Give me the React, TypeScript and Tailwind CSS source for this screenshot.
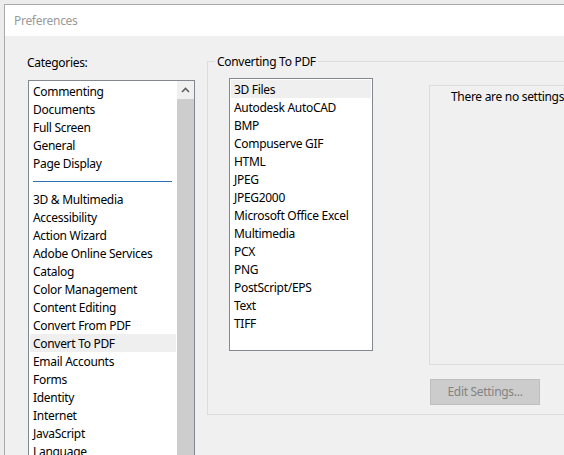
import React from 'react';

const topCategories = ['Commenting', 'Documents', 'Full Screen', 'General', 'Page Display'];
const otherCategories = [
  '3D & Multimedia',
  'Accessibility',
  'Action Wizard',
  'Adobe Online Services',
  'Catalog',
  'Color Management',
  'Content Editing',
  'Convert From PDF',
  'Convert To PDF',
  'Email Accounts',
  'Forms',
  'Identity',
  'Internet',
  'JavaScript',
  'Language',
];
const fileTypes = [
  '3D Files',
  'Autodesk AutoCAD',
  'BMP',
  'Compuserve GIF',
  'HTML',
  'JPEG',
  'JPEG2000',
  'Microsoft Office Excel',
  'Multimedia',
  'PCX',
  'PNG',
  'PostScript/EPS',
  'Text',
  'TIFF',
];

function Row({ label, selected }: { label: string; selected?: boolean }) {
  return (
    <div
      className={`h-[18px] mx-px pl-[3px] leading-[20px] whitespace-nowrap text-black ${
        selected ? 'bg-[#efefef]' : ''
      }`}
    >
      {label}
    </div>
  );
}

export default function App() {
  return (
    <div
      className="w-[564px] h-[455px] overflow-hidden bg-[#ececec] pt-[4px] pl-[4px] text-[12px] tracking-[-0.3px]"
      style={{ fontFamily: '"Noto Sans", Arial, sans-serif' }}
    >
      <div className="w-[640px] h-[500px] border-l border-t border-[#aaaaaa] flex flex-col">
        {/* Title bar */}
        <div className="h-[31px] shrink-0 bg-white pl-[9px] pt-[7px] text-[#999999] leading-[18px]">Preferences</div>

        {/* Body */}
        <div className="flex-1 bg-[#f0f0f0] flex items-start">
          {/* Categories */}
          <div className="shrink-0 pl-[22px] pt-[17px]">
            <div className="h-[18px] leading-[20px] text-black">Categories:</div>
            <div className="mt-[9px] ml-px w-[167px] h-[400px] border border-[#828790] bg-white flex">
              <div className="flex-1 pt-px">
                {topCategories.map((c) => (
                  <Row key={c} label={c} />
                ))}
                <div className="h-[18px] flex items-center pl-[4px] pr-[4px]">
                  <div className="w-[139px] h-px bg-[#2b73b8]" />
                </div>
                {otherCategories.map((c) => (
                  <Row key={c} label={c} selected={c === 'Convert To PDF'} />
                ))}
              </div>
              {/* Scrollbar */}
              <div className="w-[17px] bg-[#f0f0f0] flex flex-col">
                <div className="h-[18px] flex items-center justify-center">
                  <svg width="9" height="6" viewBox="0 0 9 6">
                    <path d="M1 5 L4.5 1.5 L8 5" fill="none" stroke="#606060" strokeWidth="1.6" />
                  </svg>
                </div>
                <div className="flex-1 bg-[#cdcdcd]" />
              </div>
            </div>
          </div>

          {/* Converting To PDF group */}
          <div className="relative shrink-0 ml-[12px] mt-[25px] w-[440px] h-[354px] border border-[#dcdcdc]">
            <div className="absolute -top-[10px] left-[7px] px-[2px] bg-[#f0f0f0] leading-[20px] text-black">
              Converting To PDF
            </div>
            <div className="flex items-start pt-[16px] pl-[21px]">
              <div className="shrink-0 w-[144px] h-[273px] border border-[#828790] bg-white pt-px">
                {fileTypes.map((f) => (
                  <Row key={f} label={f} selected={f === '3D Files'} />
                ))}
              </div>
              <div className="shrink-0 ml-[56px] mt-[7px]">
                <div className="w-[200px] h-[280px] border border-[#dcdcdc] pl-[21px] pt-[2px] leading-[18px] text-black whitespace-nowrap">
                  There are no settings
                </div>
                <div className="mt-[14px] ml-px w-[110px] h-[26px] border border-[#bfbfbf] bg-[#cccccc] text-[#838383] flex items-center justify-center">
                  Edit Settings...
                </div>
              </div>
            </div>
          </div>
        </div>
      </div>
    </div>
  );
}
